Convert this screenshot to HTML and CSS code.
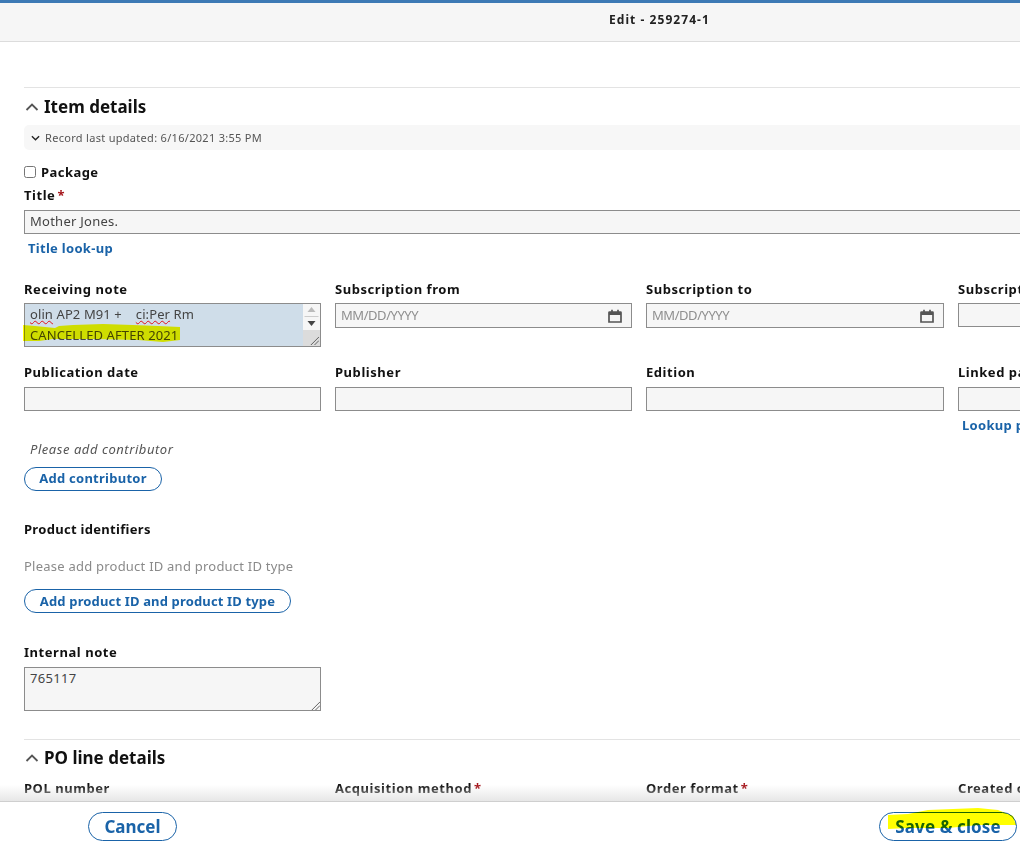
FILE: index.html
```html
<!DOCTYPE html>
<html lang="en">
<head>
<meta charset="utf-8">
<title>Edit - 259274-1</title>
<link rel="stylesheet" href="styles.css">
</head>
<body>
<div class="app">
  <header class="topbar"><span class="topbar-title">Edit - 259274-1</span></header>
  <main class="content">
    <section class="section first">
      <h2 class="section-head">
        <svg class="chev" viewBox="0 0 14 8" aria-hidden="true"><path d="M1.5 7 7 1.5 12.500 7"/></svg>
        Item details
      </h2>
      <div class="meta">
        <svg class="meta-chev" viewBox="0 0 10 6" aria-hidden="true"><path d="M1 1l4 4 4-4"/></svg>
        <span>Record last updated: 6/16/2021 3:55 PM</span>
      </div>
      <label class="package"><span class="checkbox"></span>Package</label>
      <div class="label title-label">Title<span class="req">*</span></div>
      <div class="input title-input">Mother Jones.</div>
      <a class="link title-link">Title look-up</a>

      <div class="grid row-one">
        <div class="field">
          <div class="label">Receiving note</div>
          <div class="note selected">
            <div class="note-text">
              <div><span class="squiggle">olin</span> AP2 M91 +&nbsp;&nbsp;&nbsp; <span class="squiggle">ci:Per</span> Rm</div>
              <div>CANCELLED AFTER 2021</div>
            </div>
            <div class="scrollbar">
              <svg class="arrows" viewBox="0 0 16 26" aria-hidden="true">
                <path class="up" d="M4 8 8 3l4 5z"/><path class="mid" d="M1 12.500h14"/><path class="down" d="M4 17h8l-4 5z"/>
              </svg>
              <div class="scroll-corner">
                <svg class="grip" viewBox="0 0 10 10" aria-hidden="true"><path d="M1 10 10 1M5 10l5-5"/></svg>
              </div>
            </div>
            <svg class="note-mark" viewBox="0 0 158 20" aria-hidden="true"><path d="M0 2 12 3 32 5 36 3 50 2 80 1 110 2 135 3 157 4 157 17 140 19 115 17 70 16 30 16 16 18 0 18z"/></svg>
          </div>
        </div>
        <div class="field">
          <div class="label">Subscription from</div>
          <div class="input date"><span class="placeholder">MM/DD/YYYY</span>
            <svg class="cal" viewBox="0 0 14 14" aria-hidden="true"><path class="cal-band" d="M1 3h12v3H1z"/><path d="M1.500 3h11a.5.5 0 0 1 .5.500v9.500H1V3.500a.5.5 0 0 1 .5-.5zM4 .8v3M10 .8v3"/></svg>
          </div>
        </div>
        <div class="field">
          <div class="label">Subscription to</div>
          <div class="input date"><span class="placeholder">MM/DD/YYYY</span>
            <svg class="cal" viewBox="0 0 14 14" aria-hidden="true"><path class="cal-band" d="M1 3h12v3H1z"/><path d="M1.500 3h11a.5.5 0 0 1 .5.500v9.500H1V3.500a.5.5 0 0 1 .5-.5zM4 .8v3M10 .8v3"/></svg>
          </div>
        </div>
        <div class="field">
          <div class="label">Subscription interval</div>
          <div class="input plain"></div>
        </div>
      </div>

      <div class="grid row-two">
        <div class="field"><div class="label">Publication date</div><div class="input"></div></div>
        <div class="field"><div class="label">Publisher</div><div class="input"></div></div>
        <div class="field"><div class="label">Edition</div><div class="input"></div></div>
        <div class="field"><div class="label">Linked package</div><div class="input"></div><a class="link lookup">Lookup publication</a></div>
      </div>

      <p class="hint contrib">Please add contributor</p>
      <a class="pill add-contrib">Add contributor</a>

      <div class="label product-label">Product identifiers</div>
      <p class="empty">Please add product ID and product ID type</p>
      <a class="pill add-product">Add product ID and product ID type</a>

      <div class="label internal-label">Internal note</div>
      <div class="note internal">765117
        <svg class="grip lone" viewBox="0 0 10 10" aria-hidden="true"><path d="M1 10 10 1M5 10l5-5"/></svg>
      </div>
    </section>

    <section class="section second">
      <h2 class="section-head">
        <svg class="chev" viewBox="0 0 14 8" aria-hidden="true"><path d="M1.5 7 7 1.5 12.500 7"/></svg>
        PO line details
      </h2>
      <div class="grid">
        <div class="label">POL number</div>
        <div class="label">Acquisition method<span class="req">*</span></div>
        <div class="label">Order format<span class="req">*</span></div>
        <div class="label">Created on</div>
      </div>
    </section>
  </main>
  <footer class="footer">
    <div class="shade"></div>
    <a class="pill big cancel">Cancel</a>
    <a class="pill big save">Save &amp; close
      <svg class="save-mark" viewBox="0 0 129 26" preserveAspectRatio="none" aria-hidden="true"><path d="M0 7 20 6 40 2 90 0 110 2 125 8 128 17 90 17 60 20 20 20 0 21z"/></svg>
    </a>
  </footer>
</div>
</body>
</html>
```
FILE: styles.css
```css
* { box-sizing: border-box; }
html, body { margin: 0; height: 100%; }
body {
  font-family: "Noto Sans", "Open Sans", sans-serif;
  font-size: 13px;
  line-height: 18px;
  color: #111;
  background: #fff;
  overflow: hidden;
}
.app { height: 852px; display: flex; flex-direction: column; overflow: hidden; }
.topbar {
  flex: none;
  height: 42px;
  border-top: 3px solid #3d7ab5;
  border-bottom: 1px solid #dcdcdc;
  background: #f6f6f6;
  display: flex;
  justify-content: center;
  padding-top: 8px;
}
.topbar-title { font-size: 12px; font-weight: 700; letter-spacing: 1.050px; color: #222; line-height: 18px; padding-left: 299px; }
.content { flex: 1; min-height: 0; overflow: hidden; padding: 45px 0 0 24px; width: 1300px; }
.section { border-top: 1px solid #e3e3e3; }
.section-head {
  margin: 0;
  font-size: 17px;
  line-height: 22px;
  font-weight: 700;
  letter-spacing: 0;
  display: flex;
  align-items: center;
  gap: 5px;
  color: #111;
}
.first .section-head { margin-top: 8px; }
.chev { width: 14px; height: 8px; margin-left: 1px; fill: none; stroke: #555; stroke-width: 1.800; }
.meta {
  margin-top: 7px;
  height: 25px;
  background: #f7f7f7;
  border-radius: 5px;
  display: flex;
  align-items: center;
  gap: 5px;
  padding-left: 7px;
  font-size: 11px;
  letter-spacing: .3px;
  color: #555;
}
.meta-chev { width: 9px; height: 6px; fill: none; stroke: #222; stroke-width: 1.500; }
.package {
  display: flex;
  align-items: center;
  gap: 5px;
  margin-top: 13px;
  font-weight: 700;
  letter-spacing: .45px;
  height: 18px;
}
.checkbox { width: 12px; height: 12px; border: 1px solid #767676; border-radius: 2.500px; background: #fff; }
.label { font-weight: 700; letter-spacing: .55px; line-height: 18px; color: #111; white-space: nowrap; }
.req { color: #a5151b; margin-left: 2px; }
.title-label { margin-top: 5px; }
.input {
  height: 24px;
  margin-top: 6px;
  border: 1px solid #8c8c8c;
  background: #f6f6f6;
  padding: 0 5px;
  line-height: 21px;
  letter-spacing: .25px;
  color: #444;
}
.title-input { margin-top: 6px; width: 1300px; }
.link { display: block; color: #1a63a8; font-weight: 700; letter-spacing: .3px; }
.title-link { margin: 5px 0 0 4px; }
.grid { display: grid; grid-template-columns: 297px 297px 298px 297px; column-gap: 14px; }
.row-one { margin-top: 23px; }
.row-one .input { margin-top: 5px; height: 25px; }
.row-one .input.plain { height: 24px; }
.row-two { margin-top: 16px; }
.row-two .input { margin-top: 6px; }
.field .label + .note { margin-top: 5px; }
.note {
  position: relative;
  width: 297px;
  height: 44px;
  border: 1px solid #8c8c8c;
  background: #f6f6f6;
  color: #444;
  letter-spacing: .3px;
}
.selected { background: #cfdde9; display: flex; justify-content: space-between; letter-spacing: .1px; }
.note-text { padding: 0 0 0 5px; line-height: 21px; white-space: nowrap; }
.squiggle { text-decoration: underline wavy #e0141c; text-decoration-thickness: 1.300px; text-underline-offset: 1px; }
.note-mark {
  position: absolute;
  left: -2px;
  top: 19px;
  width: 158px;
  height: 20px;
  fill: #ffff00;
  mix-blend-mode: multiply;
}
.scrollbar { width: 17px; display: flex; flex-direction: column; background: #f6f6f6; }
.arrows { width: 17px; height: 26px; flex: none; }
.arrows .up { fill: #bbb; }
.arrows .down { fill: #444; }
.arrows .mid { stroke: #ccc; fill: none; }
.scroll-corner { flex: 1; background: #dcdcdc; position: relative; }
.grip { position: absolute; right: 1px; bottom: 1px; width: 9px; height: 9px; fill: none; stroke: #555; stroke-width: 1; }
.date { display: flex; align-items: center; justify-content: space-between; padding-right: 9px; }
.placeholder { color: #8f8f8f; letter-spacing: -.45px; }
.cal { width: 14px; height: 14px; fill: none; stroke: #555; stroke-width: 1.700; }
.cal-band { fill: #555; stroke: none; }
.lookup { margin: 5px 0 0 4px; white-space: nowrap; }
.hint { margin: 0; font-style: italic; color: #555; letter-spacing: .55px; }
.contrib { margin: 6px 0 0 6px; }
.pill {
  display: inline-flex;
  align-items: center;
  justify-content: center;
  height: 24px;
  border: 1px solid #1a63a8;
  border-radius: 13px;
  background: #fff;
  color: #1a63a8;
  font-weight: 700;
  letter-spacing: .25px;
  white-space: nowrap;
}
.add-contrib { width: 138px; margin-top: 9px; padding-bottom: 2px; }
.product-label { margin-top: 29px; letter-spacing: .3px; }
.empty { margin: 19px 0 0; color: #8a8a8a; letter-spacing: .23px; }
.add-product { width: 267px; margin-top: 14px; letter-spacing: .15px; }
.internal-label { margin-top: 30px; }
.internal { margin-top: 6px; padding: 0 5px; line-height: 21px; }
.lone { right: 0; bottom: 0; }
.second { margin-top: 28px; }
.second .section-head { margin-top: 7px; }
.second .grid { margin-top: 10px; }
.footer {
  position: relative;
  flex: none;
  height: 51px;
  border-top: 1px solid #cfcfcf;
  background: #fff;
  display: flex;
  justify-content: space-between;
  align-items: flex-start;
  padding: 10px 3px 0 88px;
}
.shade {
  position: absolute;
  left: 0;
  right: 0;
  top: -17px;
  height: 16px;
  background: linear-gradient(to bottom, rgba(225,225,225,0), rgba(225,225,225,.8));
  pointer-events: none;
}
.big { position: relative; height: 29px; border-radius: 15px; font-size: 17px; letter-spacing: .1px; }
.cancel { width: 89px; letter-spacing: 0; }
.save { width: 138px; }
.save-mark {
  position: absolute;
  left: 8px;
  top: -5px;
  width: 129px;
  height: 26px;
  fill: #ffff00;
  mix-blend-mode: multiply;
}
```
